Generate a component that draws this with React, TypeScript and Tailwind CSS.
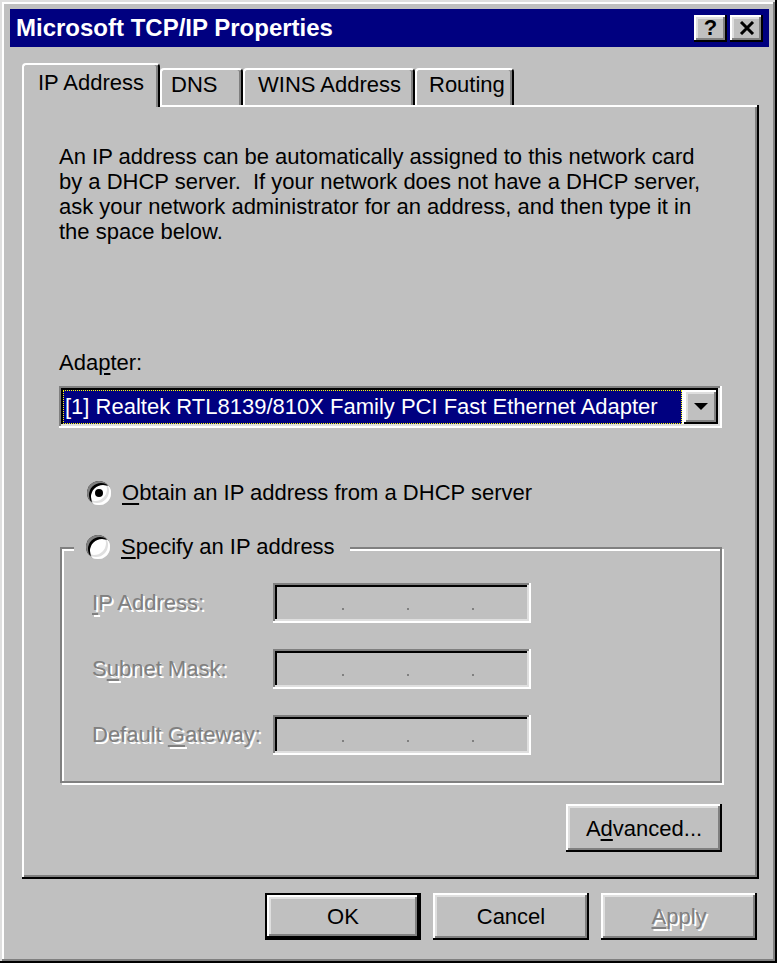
import React from 'react';

// classic 3D bevels, scaled 2x
const raised = 'shadow-[inset_-2px_-2px_#000,inset_2px_2px_#fff,inset_-4px_-4px_#808080,inset_4px_4px_#dfdfdf]';
const sunken = 'shadow-[inset_-2px_-2px_#fff,inset_2px_2px_#808080,inset_-4px_-4px_#dfdfdf,inset_4px_4px_#000]';
const greyed = 'text-[#808080] [text-shadow:2px_2px_0_#ffffff]';

function Key({ children }: { children: React.ReactNode }) {
  return <span className="underline decoration-2 underline-offset-[3px]">{children}</span>;
}

function Radio({ checked }: { checked?: boolean }) {
  return (
    <span className="flex items-center justify-center w-[24px] h-[24px] shrink-0 rounded-full bg-white shadow-[inset_2px_2px_#808080,inset_-2px_-2px_#fff,inset_4px_4px_#000,inset_-4px_-4px_#dfdfdf]">
      {checked && <span className="w-[8px] h-[8px] rounded-full bg-black" />}
    </span>
  );
}

function IpField() {
  return (
    <div className={`w-[258px] h-[40px] bg-[#c0c0c0] pl-[69px] pt-[25px] ${sunken}`}>
      <div className="flex gap-[63px]">
        <span className="w-[2px] h-[2px] bg-[#808080]" />
        <span className="w-[2px] h-[2px] bg-[#808080]" />
        <span className="w-[2px] h-[2px] bg-[#808080]" />
      </div>
    </div>
  );
}

function FieldRow({ label }: { label: React.ReactNode }) {
  return (
    <div className="flex items-center h-[40px]">
      <span className={`w-[181px] leading-[26px] ${greyed}`}>{label}</span>
      <IpField />
    </div>
  );
}

function PushButton({ children, isDefault, className = '' }: { children: React.ReactNode; isDefault?: boolean; className?: string }) {
  return (
    <div className={`w-[156px] h-[47px] ${isDefault ? 'border-2 border-black' : ''} ${className}`}>
      <div className={`w-full h-full flex items-center justify-center bg-[#c0c0c0] ${raised}`}>
        {children}
      </div>
    </div>
  );
}

function Tab({ children, active, className }: { children: React.ReactNode; active?: boolean; className: string }) {
  return (
    <div
      className={`bg-[#c0c0c0] border-t-2 border-l-2 border-r-2 border-t-white border-l-white border-r-black rounded-t-[4px] shadow-[inset_-2px_0_#808080] leading-[26px] whitespace-nowrap ${
        active ? 'relative z-10 h-[44px] -mb-[2px] pt-[5px]' : 'h-[37px] pt-[2px]'
      } ${className}`}
    >
      {children}
    </div>
  );
}

export default function App() {
  return (
    <div className="w-[781px] h-[965px] bg-white font-['Liberation_Sans',Arial,sans-serif] text-[22px] text-black">
      <div className="w-[777px] h-[963px] bg-[#c0c0c0] pt-[9px] pl-[10px] pr-[8px] shadow-[inset_-2px_-2px_#000,inset_2px_2px_#dfdfdf,inset_-4px_-4px_#808080,inset_4px_4px_#fff]">
        {/* title bar */}
        <div className="h-[38px] bg-[#000080] flex items-center pl-[6px] pr-[6px]">
          <span className="flex-1 text-white font-bold text-[24px] leading-[30px]">Microsoft TCP/IP Properties</span>
          <div className={`w-[33px] h-[27px] bg-[#c0c0c0] flex items-center justify-center font-bold text-[22px] leading-none ${raised}`}>
            ?
          </div>
          <div className={`ml-[3px] w-[33px] h-[27px] bg-[#c0c0c0] flex items-center justify-center ${raised}`}>
            <svg width="16" height="14" viewBox="0 0 16 14">
              <path d="M2 1 L14 13 M14 1 L2 13" stroke="#000" strokeWidth="3" fill="none" />
            </svg>
          </div>
        </div>

        <div className="pl-[12px] pr-[10px]">
          {/* tabs */}
          <div className="mt-[16px] flex items-end h-[42px]">
            <Tab active className="w-[138px] pl-[14px]">IP Address</Tab>
            <Tab className="w-[83px] pl-[9px]">DNS</Tab>
            <Tab className="w-[172px] pl-[13px]">WINS Address</Tab>
            <Tab className="w-[99px] pl-[12px]">Routing</Tab>
          </div>

          {/* tab page */}
          <div className="h-[774px] bg-[#c0c0c0] pt-[39px] px-[37px] flex flex-col shadow-[inset_-2px_-2px_#000,inset_2px_2px_#fff,inset_-4px_-4px_#808080]">
            <p className="leading-[25px] whitespace-pre">
              {'An IP address can be automatically assigned to this network card\nby a DHCP server.  If your network does not have a DHCP server,\nask your network administrator for an address, and then type it in\nthe space below.'}
            </p>

            <div className="mt-[106px] leading-[26px]">
              Ada<Key>p</Key>ter:
            </div>

            {/* adapter combo */}
            <div className={`mt-[10px] h-[42px] bg-white p-[4px] flex gap-[2px] ${sunken}`}>
              <div className="flex-1 bg-[#000080] border border-dotted border-[#ffff00] text-white leading-[32px] pl-[1px] whitespace-nowrap overflow-hidden">
                [1] Realtek RTL8139/810X Family PCI Fast Ethernet Adapter
              </div>
              <div className={`w-[34px] bg-[#c0c0c0] flex items-center justify-center ${raised}`}>
                <svg width="14" height="8" viewBox="0 0 14 8">
                  <path d="M0 0 H14 L7 7 Z" fill="#000" />
                </svg>
              </div>
            </div>

            <div className="mt-[52px] h-[26px] flex items-center pl-[28px] gap-[11px] leading-[26px]">
              <Radio checked />
              <span>
                <Key>O</Key>btain an IP address from a DHCP server
              </span>
            </div>

            {/* group box */}
            <div className="relative mt-[41px] ml-[1px] border-2 border-[#808080] shadow-[inset_2px_2px_#fff,2px_2px_#fff] pt-[34px] pb-[26px] pl-[30px] flex flex-col gap-[26px]">
              <div className="absolute -top-[15px] left-[12px] h-[26px] bg-[#c0c0c0] pl-[12px] pr-[15px] flex items-center gap-[11px] leading-[26px]">
                <Radio />
                <span>
                  <Key>S</Key>pecify an IP address
                </span>
              </div>
              <FieldRow label={<><Key>I</Key>P Address:</>} />
              <FieldRow label={<>S<Key>u</Key>bnet Mask:</>} />
              <FieldRow label={<>Default <Key>G</Key>ateway:</>} />
            </div>

            <PushButton className="mt-[21px] self-end h-[48px]">
              <span>
                A<Key>d</Key>vanced...
              </span>
            </PushButton>
          </div>

          {/* dialog buttons */}
          <div className="mt-[14px] flex justify-end gap-[12px] pr-[2px]">
            <PushButton isDefault>OK</PushButton>
            <PushButton>Cancel</PushButton>
            <PushButton>
              <span className={greyed}>
                <Key>A</Key>pply
              </span>
            </PushButton>
          </div>
        </div>
      </div>
    </div>
  );
}
